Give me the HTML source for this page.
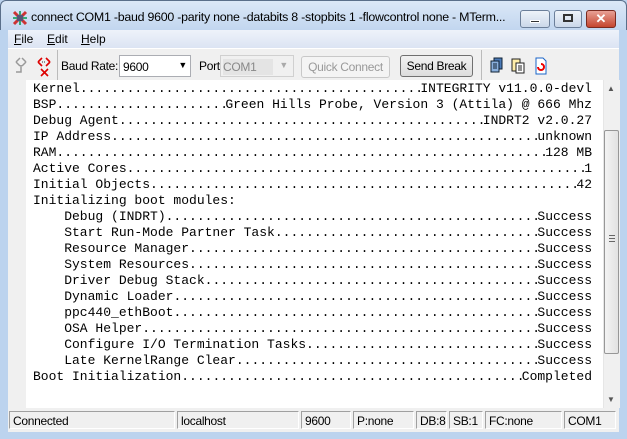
<!DOCTYPE html><html><head><style>
*{margin:0;padding:0;box-sizing:border-box}
body{width:627px;height:439px;overflow:hidden;background:#bcd3ee;font-family:"Liberation Sans",sans-serif;font-size:12px;position:relative}
.abs{position:absolute}
.title{left:0;top:0;width:627px;height:30px;background:linear-gradient(#dbe8f7,#c2d6ef);border:1px solid #5a6f8a;border-bottom:none;border-radius:6px 6px 0 0}
.ttext{left:31px;top:10px;width:486px;font-size:12.4px;letter-spacing:-0.25px;color:#000;white-space:nowrap;overflow:hidden}
.menu{left:8px;top:30px;width:611px;height:18px;background:linear-gradient(#eef2fa,#dce4f3)}
.menu span{position:absolute;top:2px;font-size:12px}
.tb{left:8px;top:48px;width:611px;height:32px;background:#f0f0f0;border-top:1px solid #fff}
.tb div{letter-spacing:-0.3px}
.txt{left:8px;top:80px;width:611px;height:328px;background:#fff}
.gut{left:8px;top:80px;width:18px;height:328px;background:#f0f0f0}
.mono{font-family:"Liberation Mono","Courier New",monospace;font-size:13px;line-height:16px;color:#000}
.ln{display:flex;width:559px;height:16px;overflow:hidden;white-space:pre}
.d{flex:1;overflow:hidden}
.sb{left:603px;top:80px;width:17px;height:328px;background:#f0f0f0;border-left:1px solid #e6e6e6}
.thumb{left:604px;top:130px;width:15px;height:224px;background:linear-gradient(90deg,#f3f3f3,#e2e2e2);border:1px solid #979797;border-radius:2px}
.status{left:8px;top:408px;width:611px;height:24px;background:#f0f0f0}
.cell{position:absolute;top:3px;height:18px;border:1px solid;border-color:#a0a0a0 #fff #fff #a0a0a0;padding:2px 0 0 3px;font-size:12px;letter-spacing:-0.3px;color:#000;white-space:nowrap;overflow:hidden}
.btn{position:absolute;height:22px;border:1px solid #707070;border-radius:3px;background:linear-gradient(#f2f2f2,#dcdcdc);text-align:center;padding-top:3px;white-space:nowrap;font-size:12px}
</style></head><body>
<div class="abs title"></div>
<svg class="abs" style="left:12px;top:10px" width="16" height="16"><path d="M2 2L14 14M14 2L2 14" stroke="#c33" stroke-width="3"/><path d="M8 1V15M1 8H15" stroke="#3a7" stroke-width="2"/><rect x="5" y="5" width="6" height="6" fill="#557"/></svg>
<div class="abs ttext">connect COM1 -baud 9600 -parity none -databits 8 -stopbits 1 -flowcontrol none - MTerm...</div>
<div class="abs" style="left:520px;top:10px;width:30px;height:18px;border:1px solid #6c7f9a;border-radius:3px;background:linear-gradient(#eef3fa,#cbd8ea)"><div style="margin:9px auto 0;width:10px;height:3px;background:#333;border:1px solid #fff"></div></div>
<div class="abs" style="left:554px;top:10px;width:28px;height:18px;border:1px solid #6c7f9a;border-radius:3px;background:linear-gradient(#eef3fa,#cbd8ea)"><div style="margin:3px auto 0;width:10px;height:8px;border:2px solid #333"></div></div>
<div class="abs" style="left:586px;top:10px;width:30px;height:18px;border:1px solid #7a2a20;border-radius:3px;background:linear-gradient(#e8a195,#c5452f);color:#fff;font-weight:bold;text-align:center;font-size:13px;line-height:16px">✕</div>
<div class="abs menu"><span style="left:6px"><u>F</u>ile</span><span style="left:39px"><u>E</u>dit</span><span style="left:73px"><u>H</u>elp</span></div>
<div class="abs tb">
<svg class="abs" style="left:2px;top:7px" width="48" height="22"><path d="M6 6L10 2M6 6L10 10M16 6L12 2M16 6L12 10M11 9V16H6" stroke="#999" stroke-width="1.5" fill="none"/><path d="M28 6L32 2M28 6L32 10M40 6L36 2M40 6L36 10M31 13L38 20M38 13L31 20" stroke="#d00" stroke-width="1.6" fill="none"/><path d="M32 6h1M34 6h1" stroke="#333"/></svg>
<div class="abs" style="left:49px;top:1px;width:1px;height:30px;background:#bbb"></div>
<div class="abs" style="left:53px;top:10px;font-size:12px">Baud Rate:</div>
<div class="abs" style="left:111px;top:6px;width:72px;height:22px;background:#fff;border:1px solid #abadb3;padding:4px 3px">9600<span style="position:absolute;right:3px;top:4px;font-size:9px">▼</span></div>
<div class="abs" style="left:191px;top:10px;font-size:12px">Port:</div>
<div class="abs" style="left:212px;top:6px;width:74px;height:22px;background:#f0f0f0;border:1px solid #d0d0d0;padding:3px 2px;color:#888"><span style="display:inline-block;background:#e4e4e4;width:50px;padding:1px 0">COM1</span><span style="position:absolute;right:5px;top:4px;font-size:9px;color:#aaa">▼</span></div>
<div class="btn" style="left:293px;top:7px;width:89px;color:#999;border-color:#c8c8c8;background:#f4f4f4">Quick Connect</div>
<div class="btn" style="left:392px;top:6px;width:73px">Send Break</div>
<div class="abs" style="left:473px;top:1px;width:1px;height:30px;background:#bbb"></div>
<svg class="abs" style="left:480px;top:7px" width="70" height="20"><rect x="6" y="2" width="8" height="11" fill="#4a7ab8" stroke="#123"/><rect x="3" y="5" width="8" height="11" fill="#8ab0dd" stroke="#123"/><path d="M5 8h4M5 10h4M5 12h4" stroke="#123"/><rect x="24" y="3" width="8" height="12" fill="#ffeeaa" stroke="#222"/><rect x="28" y="7" width="8" height="10" fill="#fff" stroke="#222"/><path d="M30 10h4M30 12h4M30 14h4" stroke="#222"/><path d="M48 2h7l3 3v13h-10z" fill="#fff" stroke="#1a64c8"/><path d="M50 11a3 3 0 1 0 3-3" stroke="#e00" stroke-width="2" fill="none"/></svg>
</div>
<div class="abs txt"></div>
<div class="abs gut"></div>
<div class="abs mono" style="left:33px;top:81px">
<div class="ln">Kernel<span class="d">............................................................................</span>INTEGRITY v11.0.0-devl</div>
<div class="ln">BSP<span class="d">............................................................................</span>Green Hills Probe, Version 3 (Attila) @ 666 Mhz</div>
<div class="ln">Debug Agent<span class="d">............................................................................</span>INDRT2 v2.0.27</div>
<div class="ln">IP Address<span class="d">............................................................................</span>unknown</div>
<div class="ln">RAM<span class="d">............................................................................</span>128 MB</div>
<div class="ln">Active Cores<span class="d">............................................................................</span>1</div>
<div class="ln">Initial Objects<span class="d">............................................................................</span>42</div>
<div class="ln">Initializing boot modules:</div>
<div class="ln">    Debug (INDRT)<span class="d">............................................................................</span>Success</div>
<div class="ln">    Start Run-Mode Partner Task<span class="d">............................................................................</span>Success</div>
<div class="ln">    Resource Manager<span class="d">............................................................................</span>Success</div>
<div class="ln">    System Resources<span class="d">............................................................................</span>Success</div>
<div class="ln">    Driver Debug Stack<span class="d">............................................................................</span>Success</div>
<div class="ln">    Dynamic Loader<span class="d">............................................................................</span>Success</div>
<div class="ln">    ppc440_ethBoot<span class="d">............................................................................</span>Success</div>
<div class="ln">    OSA Helper<span class="d">............................................................................</span>Success</div>
<div class="ln">    Configure I/O Termination Tasks<span class="d">............................................................................</span>Success</div>
<div class="ln">    Late KernelRange Clear<span class="d">............................................................................</span>Success</div>
<div class="ln">Boot Initialization<span class="d">............................................................................</span>Completed</div>
</div>
<div class="abs sb"></div>
<div class="abs" style="left:607px;top:84px;font-size:8px;color:#555">▲</div>
<div class="abs thumb"><div style="margin:104px auto 0;width:6px;height:7px;border-top:1px solid #666;border-bottom:1px solid #666;position:relative"><div style="position:absolute;top:2px;width:6px;height:1px;background:#666"></div></div></div>
<div class="abs" style="left:607px;top:395px;font-size:8px;color:#555">▼</div>
<div class="abs status">
<div class="cell" style="left:1px;width:166px">Connected</div>
<div class="cell" style="left:169px;width:122px">localhost</div>
<div class="cell" style="left:293px;width:50px">9600</div>
<div class="cell" style="left:345px;width:61px">P:none</div>
<div class="cell" style="left:408px;width:31px">DB:8</div>
<div class="cell" style="left:441px;width:34px">SB:1</div>
<div class="cell" style="left:477px;width:77px">FC:none</div>
<div class="cell" style="left:556px;width:52px">COM1</div>
</div>
</body></html>
